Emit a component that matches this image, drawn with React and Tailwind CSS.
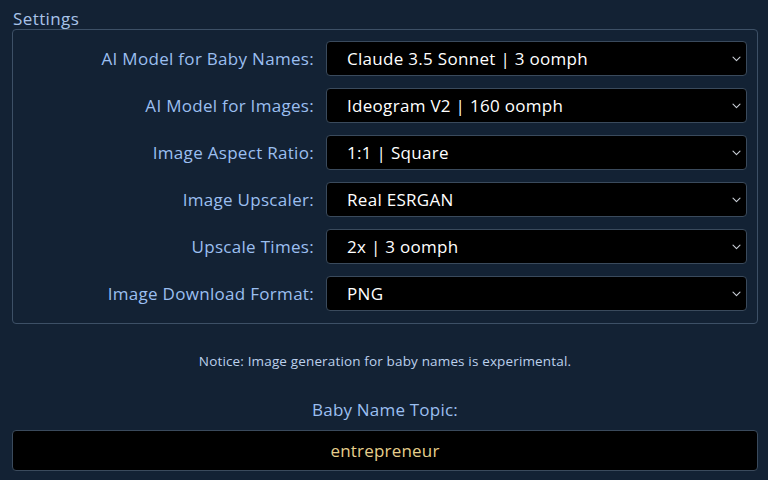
import React from "react";

const rows = [
  ["AI Model for Baby Names:", "Claude 3.5 Sonnet | 3 oomph"],
  ["AI Model for Images:", "Ideogram V2 | 160 oomph"],
  ["Image Aspect Ratio:", "1:1 | Square"],
  ["Image Upscaler:", "Real ESRGAN"],
  ["Upscale Times:", "2x | 3 oomph"],
  ["Image Download Format:", "PNG"],
];

function Chevron() {
  return (
    <svg width="9" height="6" viewBox="0 0 9 6" fill="none" className="shrink-0">
      <path d="M1 1.2l3.5 3.5 3.5-3.5" stroke="#c9ced6" strokeWidth="1.1" strokeLinecap="round" strokeLinejoin="round" />
    </svg>
  );
}

export default function App() {
  return (
    <div
      className="w-[768px] h-[480px] overflow-hidden bg-[#132234] pl-3 pr-[10px] pt-[8px]"
      style={{ fontFamily: '"Open Sans", "Noto Sans", sans-serif' }}
    >
      <div className="text-[17px] leading-[21px] tracking-[0.4px] text-[#a9c4e9] pl-px">Settings</div>
      <div className="border border-[#3d5066] rounded-[4px] pt-[11px] pb-3 pr-[10px] flex flex-col gap-3">
        {rows.map(([label, value]) => (
          <div key={label} className="grid grid-cols-[1fr_421px] gap-3 items-center">
            <div className="text-right text-[17px] tracking-[0.3px] text-[#9bbff0]">{label}</div>
            <div className="h-[35px] bg-black border border-[#3a4a5c] rounded-[4px] flex items-center justify-between pl-5 pr-[5px]">
              <span className="text-[17px] tracking-[0.3px] text-white">{value}</span>
              <Chevron />
            </div>
          </div>
        ))}
      </div>
      <div className="mt-[29px] text-center text-[13.5px] leading-[16px] tracking-[0.15px] text-[#bcd0ec]">
        Notice: Image generation for baby names is experimental.
      </div>
      <div className="mt-[31px] text-center text-[17px] leading-[20px] tracking-[0.2px] text-[#9bbff0]">Baby Name Topic:</div>
      <div className="mt-[10px] h-[41px] bg-black border border-[#3a4a5c] rounded-[4px] flex items-center justify-center">
        <span className="text-[17px] tracking-[0.2px] text-[#e6cf8c]">entrepreneur</span>
      </div>
    </div>
  );
}
